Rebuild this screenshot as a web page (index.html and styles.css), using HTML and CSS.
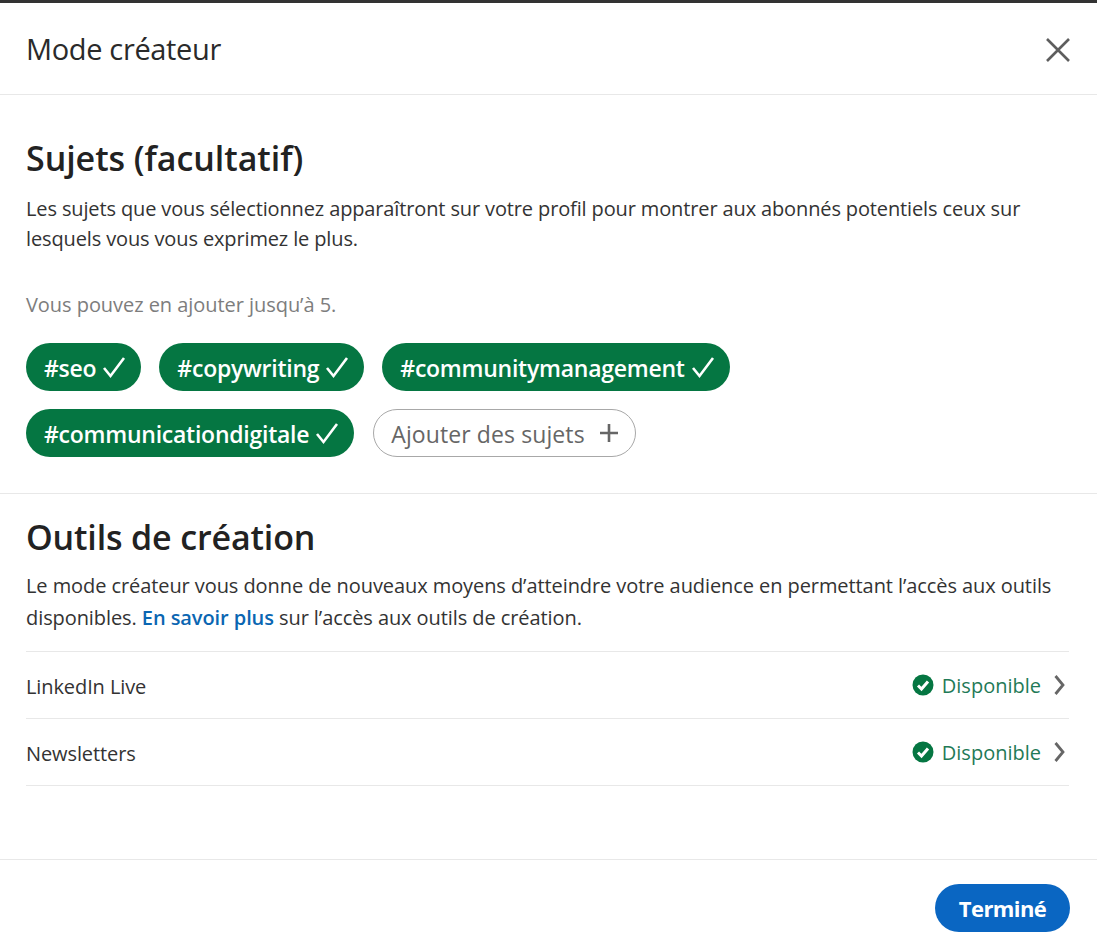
FILE: index.html
```html
<!DOCTYPE html>
<html lang="fr">
<head>
    <meta charset="utf-8" />
    <title>Mode créateur</title>
    <link rel="stylesheet" href="styles.css">
</head>
<body>
    <div class="topstrip"></div>
    <div class="modal">
        <header class="modal-head">
            <h2>Mode créateur</h2>
            <svg class="close" viewBox="0 0 24 24" width="24" height="24"><path d="M1 1 L23 23 M23 1 L1 23" /></svg>
        </header>

        <section class="topics">
            <h1>Sujets (facultatif)</h1>
            <p>Les sujets que vous sélectionnez apparaîtront sur votre profil pour montrer aux abonnés potentiels ceux sur lesquels vous vous exprimez le plus.</p>
            <p class="hint">Vous pouvez en ajouter jusqu’à 5.</p>
            <div class="chips">
                <span class="chip">#seo <svg viewBox="0 0 24 24" width="24" height="24"><path d="M2 13 L8.5 21 L22 3" /></svg></span>
                <span class="chip">#copywriting <svg viewBox="0 0 24 24" width="24" height="24"><path d="M2 13 L8.5 21 L22 3" /></svg></span>
                <span class="chip">#communitymanagement <svg viewBox="0 0 24 24" width="24" height="24"><path d="M2 13 L8.5 21 L22 3" /></svg></span>
                <span class="chip">#communicationdigitale <svg viewBox="0 0 24 24" width="24" height="24"><path d="M2 13 L8.5 21 L22 3" /></svg></span>
                <span class="chip add">Ajouter des sujets <svg viewBox="0 0 20 20" width="20" height="20"><path d="M10 1 V19 M1 10 H19" /></svg></span>
            </div>
        </section>

        <section class="tools">
            <h1>Outils de création</h1>
            <p>Le mode créateur vous donne de nouveaux moyens d’atteindre votre audience en permettant l’accès aux outils disponibles. <a href="#">En savoir plus</a> sur l’accès aux outils de création.</p>
            <ul class="tool-list">
                <li>
                    <span class="tool-name">LinkedIn Live</span>
                    <span class="status">
                        <svg class="ok" viewBox="0 0 22 22" width="22" height="22"><circle cx="11" cy="11" r="10.5" /><path d="M6 11.5 L9.5 15 L16 7.5" /></svg>
                        Disponible
                        <svg class="chev" viewBox="0 0 12 22" width="12" height="22"><path d="M2.5 2 L10 11 L2.5 20" /></svg>
                    </span>
                </li>
                <li>
                    <span class="tool-name">Newsletters</span>
                    <span class="status">
                        <svg class="ok" viewBox="0 0 22 22" width="22" height="22"><circle cx="11" cy="11" r="10.5" /><path d="M6 11.5 L9.5 15 L16 7.5" /></svg>
                        Disponible
                        <svg class="chev" viewBox="0 0 12 22" width="12" height="22"><path d="M2.5 2 L10 11 L2.5 20" /></svg>
                    </span>
                </li>
            </ul>
        </section>

        <footer class="modal-foot">
            <button class="done">Terminé</button>
        </footer>
    </div>
</body>
</html>
```

FILE: styles.css
```css
html, body {
	margin: 0;
	padding: 0;
	background: #fff;
}

body {
	font-family: "Open Sans", "Noto Sans", Arial, sans-serif;
	color: #333;
	font-size: 20px;
	height: 944px;
	overflow: hidden;
	position: relative;
}

.topstrip {
	height: 3px;
	background: #333;
}

.modal-head {
	height: 92px;
	box-sizing: border-box;
	border-bottom: 1px solid #e8e8e8;
	padding: 3px 27px 0 26px;
	display: flex;
	align-items: center;
	justify-content: space-between;
}

.modal-head h2 {
	margin: 0 0 4px;
	font-size: 29px;
	font-weight: 400;
	letter-spacing: -0.35px;
	color: #2a2a2a;
}

.close path {
	fill: none;
	stroke: #5e5e5e;
	stroke-width: 2.6;
}

section {
	padding: 0 26px;
}

h1 {
	margin: 0;
	font-size: 34px;
	line-height: 44px;
	font-weight: 600;
	letter-spacing: -0.05px;
	color: #222;
}

p {
	margin: 0;
	font-size: 20px;
	letter-spacing: -0.13px;
}

a {
	color: #0a66b2;
	font-weight: 600;
	text-decoration: none;
}

.topics {
	height: 399px;
	box-sizing: border-box;
	padding-top: 41px;
	border-bottom: 1px solid #e8e8e8;
}

.topics p {
	margin-top: 14px;
	line-height: 30px;
}

.topics .hint {
	margin-top: 36px;
	color: #7d7d7d;
	letter-spacing: -0.05px;
}

.chips {
	display: flex;
	flex-wrap: wrap;
	gap: 18px;
	margin-top: 23px;
	max-width: 780px;
}

.chip {
	display: inline-flex;
	align-items: center;
	gap: 6px;
	height: 48px;
	box-sizing: border-box;
	padding: 2px 15px 0 18px;
	border-radius: 24px;
	background: #057642;
	color: #fff;
	font-size: 23px;
	font-weight: 600;
	letter-spacing: -0.25px;
}

.chip svg {
	margin-top: -2px;
}

.chip svg path {
	fill: none;
	stroke: #fff;
	stroke-width: 2.6;
}

.chip.add {
	margin-left: 1px;
	background: #fff;
	border: 1px solid #a8a8a8;
	color: #666;
	font-weight: 400;
	letter-spacing: 0.1px;
	padding: 2px 16px 0 17px;
	gap: 14px;
}

.chip.add svg path {
	stroke: #666;
	stroke-width: 2.6;
}

.tools {
	padding-top: 21px;
}

.tools h1 {
	letter-spacing: -0.15px;
}

.tools p {
	margin-top: 11px;
	line-height: 32px;
	letter-spacing: -0.08px;
}

.tool-list {
	list-style: none;
	margin: 17px 2px 0 0;
	padding: 0;
	border-bottom: 1px solid #e8e8e8;
}

.tool-list li {
	height: 67px;
	box-sizing: border-box;
	border-top: 1px solid #e8e8e8;
	display: flex;
	align-items: center;
	justify-content: space-between;
}

.tool-name {
	padding-top: 3px;
	letter-spacing: -0.1px;
}

.status {
	display: flex;
	align-items: center;
	gap: 7px;
	color: #1f7a57;
	padding-right: 4px;
}

.ok {
	margin-right: 1px;
}

.ok circle {
	fill: #057642;
}

.ok path {
	fill: none;
	stroke: #fff;
	stroke-width: 3;
}

.chev {
	margin-left: 5px;
}

.chev path {
	fill: none;
	stroke: #666;
	stroke-width: 2.8;
}

.modal-foot {
	position: absolute;
	left: 0;
	right: 0;
	top: 859px;
	height: 85px;
	box-sizing: border-box;
	border-top: 1px solid #e8e8e8;
	padding: 24px 27px 0 0;
	display: flex;
	justify-content: flex-end;
	align-items: flex-start;
}

.done {
	width: 135px;
	height: 48px;
	border: 0;
	border-radius: 24px;
	background: #0a66c2;
	color: #fff;
	font-family: inherit;
	font-size: 22px;
	font-weight: 700;
	letter-spacing: -0.6px;
}
```
